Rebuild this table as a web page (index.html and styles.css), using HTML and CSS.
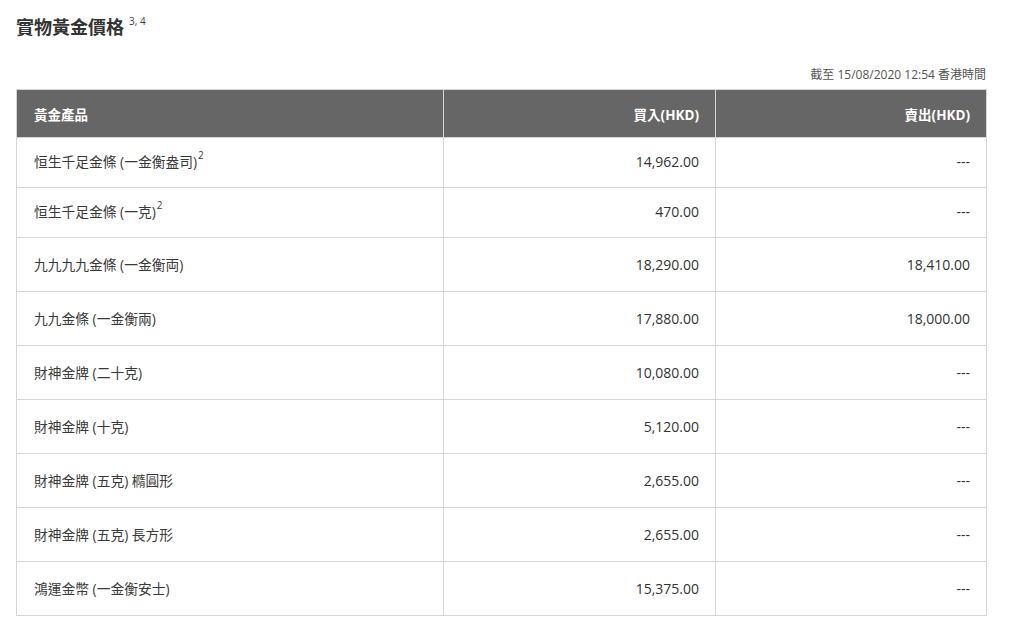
FILE: index.html
```html
<!DOCTYPE html>
<html lang="zh-Hant">
<head>
<meta charset="utf-8">
<title>實物黃金價格</title>
<link rel="stylesheet" href="styles.css">
</head>
<body>
<div class="page">
  <h2 class="title">實物黃金價格<sup class="title-note">3, 4</sup></h2>
  <div class="timestamp">截至 15/08/2020 12:54 香港時間</div>
  <table class="price-table">
    <colgroup>
      <col class="col-name">
      <col class="col-buy">
      <col class="col-sell">
    </colgroup>
    <thead>
      <tr>
        <th class="name">黃金產品</th>
        <th class="num">買入(HKD)</th>
        <th class="num">賣出(HKD)</th>
      </tr>
    </thead>
    <tbody>
      <tr class="short">
        <td class="name">恒生千足金條 (一金衡盎司)<sup class="note">2</sup></td>
        <td class="num">14,962.00</td>
        <td class="num">---</td>
      </tr>
      <tr class="short">
        <td class="name">恒生千足金條 (一克)<sup class="note">2</sup></td>
        <td class="num">470.00</td>
        <td class="num">---</td>
      </tr>
      <tr>
        <td class="name">九九九九金條 (一金衡両)</td>
        <td class="num">18,290.00</td>
        <td class="num">18,410.00</td>
      </tr>
      <tr>
        <td class="name">九九金條 (一金衡兩)</td>
        <td class="num">17,880.00</td>
        <td class="num">18,000.00</td>
      </tr>
      <tr>
        <td class="name">財神金牌 (二十克)</td>
        <td class="num">10,080.00</td>
        <td class="num">---</td>
      </tr>
      <tr>
        <td class="name">財神金牌 (十克)</td>
        <td class="num">5,120.00</td>
        <td class="num">---</td>
      </tr>
      <tr>
        <td class="name">財神金牌 (五克) 橢圓形</td>
        <td class="num">2,655.00</td>
        <td class="num">---</td>
      </tr>
      <tr>
        <td class="name">財神金牌 (五克) 長方形</td>
        <td class="num">2,655.00</td>
        <td class="num">---</td>
      </tr>
      <tr>
        <td class="name">鴻運金幣 (一金衡安士)</td>
        <td class="num">15,375.00</td>
        <td class="num">---</td>
      </tr>
    </tbody>
  </table>
</div>
</body>
</html>
```
FILE: styles.css
```css
html, body {
  margin: 0;
  padding: 0;
  background: #ffffff;
}

body {
  font-family: "Open Sans", "Noto Sans CJK TC", sans-serif;
  color: #333333;
}

.page {
  padding: 0 25px 0 16px;
}

.title {
  margin: 14px 0 0 0;
  font-size: 18px;
  line-height: 26px;
  font-weight: 700;
  color: #333333;
}

.title-note {
  font-size: 10px;
  font-weight: 400;
  line-height: 0;
  vertical-align: 9px;
  margin-left: 5px;
  color: #444444;
}

.timestamp {
  margin-top: 27px;
  text-align: right;
  font-size: 12px;
  line-height: 16px;
  color: #555555;
}

.price-table {
  margin-top: 6px;
  width: 970px;
  border-collapse: collapse;
  table-layout: fixed;
  border: 1px solid #d6d6d6;
}

.col-name { width: 427px; }
.col-buy { width: 272px; }
.col-sell { width: 271px; }

.price-table th {
  background: #666666;
  color: #ffffff;
  font-weight: 700;
  font-size: 13.5px;
  height: 47px;
  padding: 0 16px 0 17px;
  border: 1px solid #d6d6d6;
  border-top: none;
  vertical-align: middle;
}

.price-table td {
  height: 52px;
  padding: 0 16px 1px 17px;
  border: 1px solid #d6d6d6;
  font-size: 14px;
  color: #333333;
  vertical-align: middle;
}

.price-table tr.short td {
  height: 46px;
  padding-bottom: 3px;
}

.price-table .name {
  text-align: left;
}

.price-table td.name {
  font-size: 13.75px;
  color: #3a3a3a;
}

.price-table .num {
  text-align: right;
}

.note {
  font-size: 10px;
  line-height: 0;
  vertical-align: 8px;
  margin-left: 1px;
}
```
